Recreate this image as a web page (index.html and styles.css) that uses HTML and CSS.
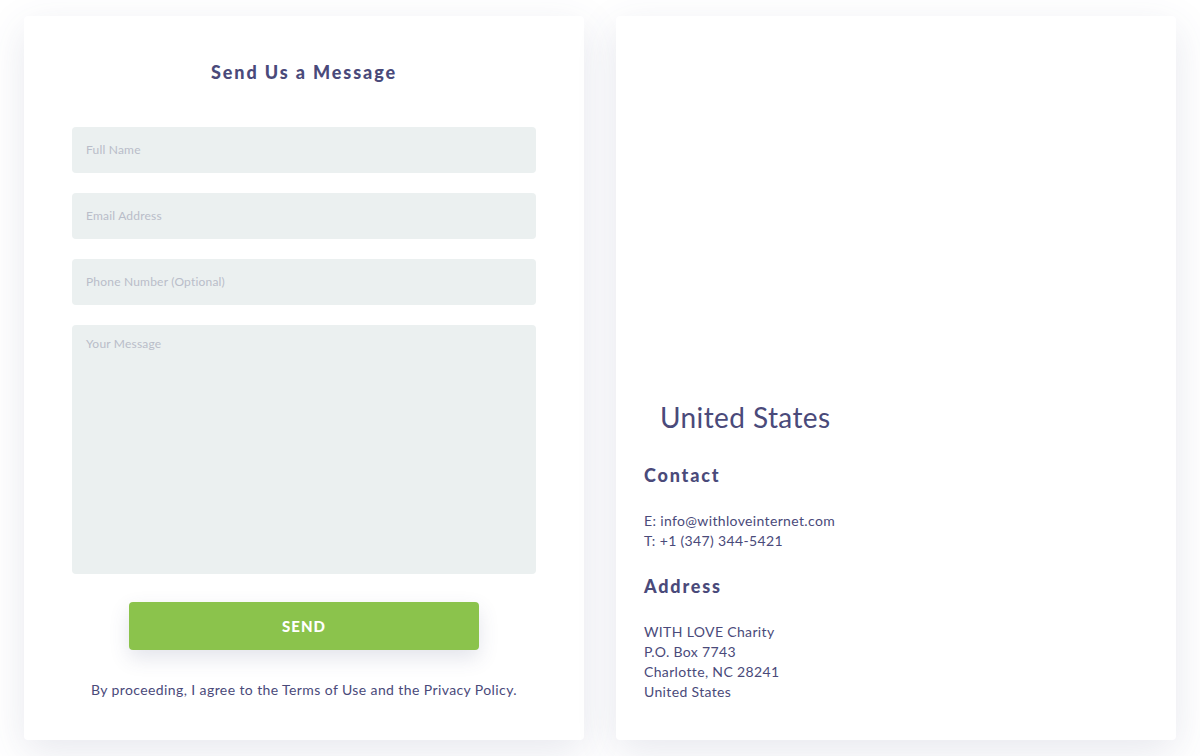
FILE: index.html
```html
<!DOCTYPE html>
<html lang="en">
<head>
<meta charset="utf-8">
<title>Contact</title>
<link rel="stylesheet" href="styles.css">
</head>
<body>
<main class="page">
  <section class="card form-card">
    <h2 class="form-title">Send Us a Message</h2>
    <form class="form">
      <input class="field" type="text" placeholder="Full Name">
      <input class="field" type="email" placeholder="Email Address">
      <input class="field" type="tel" placeholder="Phone Number (Optional)">
      <textarea class="field area" placeholder="Your Message"></textarea>
      <button class="send" type="button">SEND</button>
      <p class="legal">By proceeding, I agree to the Terms of Use and the Privacy Policy.</p>
    </form>
  </section>
  <section class="card info-card">
    <div class="map">
      <div class="country">United States</div>
    </div>
    <h3 class="info-title">Contact</h3>
    <p class="info-text">E: info@withloveinternet.com<br>T: +1 (347) 344-5421</p>
    <h3 class="info-title">Address</h3>
    <p class="info-text">WITH LOVE Charity<br>P.O. Box 7743<br>Charlotte, NC 28241<br>United States</p>
  </section>
</main>
</body>
</html>
```
FILE: styles.css
```css
* { box-sizing: border-box; }
html, body { margin: 0; padding: 0; background: #ffffff; }
body {
  font-family: Lato, "Open Sans", "Liberation Sans", sans-serif;
  color: #4a4a7a;
  overflow: hidden;
  height: 756px;
}
.page {
  display: flex;
  gap: 32px;
  padding: 16px 24px 0;
}
.card {
  width: 560px;
  height: 724px;
  background: #fff;
  border-radius: 4px;
  box-shadow: 0 12px 40px rgba(70, 75, 120, 0.13);
}
.form-card {
  padding: 44px 48px 0;
}
.form-title {
  margin: 0 0 43px;
  text-align: center;
  font-size: 18px;
  font-weight: 900;
  letter-spacing: 1.9px;
  line-height: 24px;
  color: #4a4a7a;
}
.form {
  display: flex;
  flex-direction: column;
  align-items: center;
}
.field {
  display: block;
  width: 464px;
  height: 46px;
  margin: 0 0 20px;
  padding: 0 14px 2px;
  border: 0;
  border-radius: 4px;
  background: #ebf0f0;
  font-family: inherit;
  font-size: 12px;
  letter-spacing: 0.2px;
  color: #4a4a7a;
  outline: none;
}
.field::placeholder { color: #b9bdc9; }
.area {
  height: 249px;
  padding-top: 11px;
  resize: none;
  margin-bottom: 28px;
}
.send {
  width: 350px;
  height: 48px;
  border: 0;
  border-radius: 4px;
  background: #8bc34c;
  color: #fff;
  font-family: inherit;
  font-size: 15px;
  font-weight: 900;
  letter-spacing: 1px;
  box-shadow: 0 8px 20px rgba(70, 75, 120, 0.15);
}
.legal {
  margin: 31px 0 0;
  font-size: 14px;
  line-height: 18px;
  color: #4a4a7a;
  text-align: center;
  letter-spacing: 0.4px;
}
.info-card {
  padding: 0 28px;
}
.map {
  height: 419px;
  display: flex;
  align-items: flex-end;
  padding: 0 16px 0;
}
.country {
  font-size: 28px;
  font-weight: 400;
  line-height: 36px;
  color: #4a4a7a;
  letter-spacing: 0.4px;
}
.info-title {
  margin: 28px 0 0;
  font-size: 18px;
  font-weight: 900;
  letter-spacing: 1.8px;
  line-height: 24px;
  color: #4a4a7a;
}
.info-text + .info-title { margin-top: 23px; }
.info-title + .info-text { margin-top: 24px; }
.info-text {
  margin: 0;
  font-size: 14px;
  line-height: 20px;
  letter-spacing: 0.35px;
  color: #4a4a7a;
}
```
